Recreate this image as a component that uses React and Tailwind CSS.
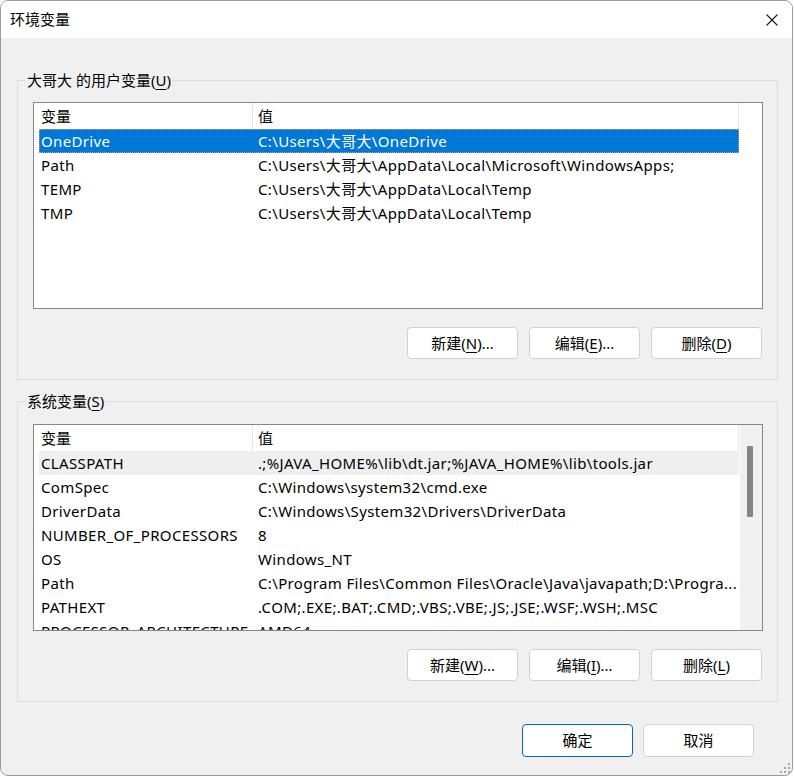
import React from "react"

const userVars = [
  ["OneDrive", "C:\\Users\\大哥大\\OneDrive"],
  ["Path", "C:\\Users\\大哥大\\AppData\\Local\\Microsoft\\WindowsApps;"],
  ["TEMP", "C:\\Users\\大哥大\\AppData\\Local\\Temp"],
  ["TMP", "C:\\Users\\大哥大\\AppData\\Local\\Temp"],
]

const sysVars = [
  ["CLASSPATH", ".;%JAVA_HOME%\\lib\\dt.jar;%JAVA_HOME%\\lib\\tools.jar"],
  ["ComSpec", "C:\\Windows\\system32\\cmd.exe"],
  ["DriverData", "C:\\Windows\\System32\\Drivers\\DriverData"],
  ["NUMBER_OF_PROCESSORS", "8"],
  ["OS", "Windows_NT"],
  ["Path", "C:\\Program Files\\Common Files\\Oracle\\Java\\javapath;D:\\Progra..."],
  ["PATHEXT", ".COM;.EXE;.BAT;.CMD;.VBS;.VBE;.JS;.JSE;.WSF;.WSH;.MSC"],
  ["PROCESSOR_ARCHITECTURE", "AMD64"],
]

const Btn = ({ children, primary, tall }) => (
  <button
    className={`w-[111px] ${tall ? "h-[33px]" : "h-[32px]"} rounded-[4px] bg-white text-[15px] leading-none text-black border ${
      primary ? "border-[#0067c0]" : "border-[#d1d1d1]"
    } flex items-center justify-center`}
  >
    {children}
  </button>
)

const Mn = ({ c }) => <span className="underline underline-offset-[3px]">{c}</span>

const ListView = ({ rows, selected, hovered, scroll }) => (
  <div className="w-[730px] h-[207px] border border-[#828790] bg-white flex overflow-hidden">
    <div className="w-[706px] flex flex-col">
      <div className="h-[26px] w-[705px] flex items-center border-r border-[#e5e5e5] shrink-0">
        <div className="w-[219px] h-full pl-[7px] flex items-center border-r border-[#e5e5e5]">变量</div>
        <div className="pl-[5px]">值</div>
      </div>
      {rows.map(([name, value], i) => (
        <div
          key={name + i}
          className={`ml-[5px] w-[700px] h-[24px] shrink-0 flex items-center border tracking-[0.35px] ${
            i === selected
              ? "bg-[#0078d7] text-white border-dotted border-[#e39a4f]"
              : i === hovered
              ? "bg-[#efefef] border-transparent"
              : "border-transparent"
          }`}
        >
          <div className="w-[218px] pl-[1px] whitespace-nowrap overflow-hidden">{name}</div>
          <div className="whitespace-nowrap">{value}</div>
        </div>
      ))}
    </div>
    {scroll && (
      <div className="flex-1 bg-[#f0f0f0] pl-[7px] pt-[21px]">
        <div className="w-[6px] h-[71px] rounded-[1px] bg-[#858585]" />
      </div>
    )}
  </div>
)

const Group = ({ legend, children, className }) => (
  <fieldset className={`w-[761px] border border-[#dcdcdc] pl-[15px] pb-[20px] ${className}`}>
    <legend className="ml-[-7px] px-[1px] leading-[20px]">{legend}</legend>
    {children}
  </fieldset>
)

export default function App() {
  return (
    <div className="w-[794px] h-[777px] bg-white font-['Noto_Sans','Noto_Sans_CJK_SC',sans-serif] text-[15px] text-black">
      <div className="relative w-[793px] h-[776px] border border-[#9b9b9b] rounded-[8px] overflow-hidden bg-[#f0f0f0] flex flex-col">
        {/* title bar */}
        <div className="h-[37px] bg-white flex items-center justify-between pl-[9px] pr-[14px] shrink-0">
          <span className="leading-none">环境变量</span>
          <svg width="12" height="12" viewBox="0 0 12 12" fill="none" stroke="#1a1a1a" strokeWidth="1.1">
            <path d="M0.5 0.5 L11.5 11.5 M11.5 0.5 L0.5 11.5" />
          </svg>
        </div>

        <div className="pl-[16px] pt-[32px] flex flex-col">
          <Group legend={<>大哥大 的用户变量(<Mn c="U" />)</>}>
            <div className="pt-[12px]">
              <ListView rows={userVars} selected={0} />
            </div>
            <div className="w-[730px] mt-[18px] pr-[1px] flex justify-end gap-[11px]">
              <Btn>新建(<Mn c="N" />)...</Btn>
              <Btn>编辑(<Mn c="E" />)...</Btn>
              <Btn>删除(<Mn c="D" />)</Btn>
            </div>
          </Group>

          <Group legend={<>系统变量(<Mn c="S" />)</>} className="mt-[11px]">
            <div className="pt-[13px]">
              <ListView rows={sysVars} hovered={0} scroll />
            </div>
            <div className="w-[730px] mt-[18px] pr-[1px] flex justify-end gap-[11px]">
              <Btn>新建(<Mn c="W" />)...</Btn>
              <Btn>编辑(<Mn c="I" />)...</Btn>
              <Btn>删除(<Mn c="L" />)</Btn>
            </div>
          </Group>

          <div className="w-[761px] mt-[22px] pr-[24px] flex justify-end gap-[10px]">
            <Btn primary tall>确定</Btn>
            <Btn tall>取消</Btn>
          </div>
        </div>

        {/* resize grip */}
        <svg className="absolute right-[1px] bottom-[1px]" width="12" height="12" viewBox="0 0 12 12" fill="#a6a6a6">
          <rect x="9" y="1" width="2" height="2" />
          <rect x="5" y="5" width="2" height="2" />
          <rect x="9" y="5" width="2" height="2" />
          <rect x="1" y="9" width="2" height="2" />
          <rect x="5" y="9" width="2" height="2" />
          <rect x="9" y="9" width="2" height="2" />
        </svg>
      </div>
    </div>
  )
}
